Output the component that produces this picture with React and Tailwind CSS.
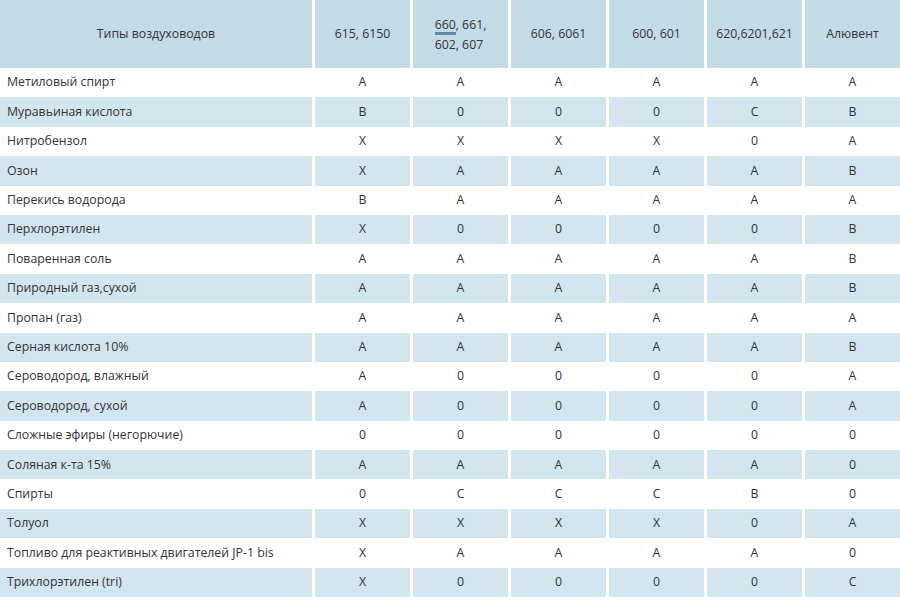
import React from "react";

const cols = ["615, 6150", "660", "606, 6061", "600, 601", "620,6201,621", "Алювент"];

const rows = [
  ["Метиловый спирт", "A", "A", "A", "A", "A", "A"],
  ["Муравьиная кислота", "B", "0", "0", "0", "C", "B"],
  ["Нитробензол", "X", "X", "X", "X", "0", "A"],
  ["Озон", "X", "A", "A", "A", "A", "B"],
  ["Перекись водорода", "B", "A", "A", "A", "A", "A"],
  ["Перхлорэтилен", "X", "0", "0", "0", "0", "B"],
  ["Поваренная соль", "A", "A", "A", "A", "A", "B"],
  ["Природный газ,сухой", "A", "A", "A", "A", "A", "B"],
  ["Пропан (газ)", "A", "A", "A", "A", "A", "A"],
  ["Серная кислота 10%", "A", "A", "A", "A", "A", "B"],
  ["Сероводород, влажный", "A", "0", "0", "0", "0", "A"],
  ["Сероводород, сухой", "A", "0", "0", "0", "0", "A"],
  ["Сложные эфиры (негорючие)", "0", "0", "0", "0", "0", "0"],
  ["Соляная к-та 15%", "A", "A", "A", "A", "A", "0"],
  ["Спирты", "0", "C", "C", "C", "B", "0"],
  ["Толуол", "X", "X", "X", "X", "0", "A"],
  ["Топливо для реактивных двигателей JP-1 bis", "X", "A", "A", "A", "A", "0"],
  ["Трихлорэтилен (tri)", "X", "0", "0", "0", "0", "C"],
];

export default function App() {
  return (
    <div
      className="w-[900px] h-[601px] bg-white overflow-hidden text-[#333333] text-[12.3px]"
      style={{ fontFamily: '"Open Sans", "Noto Sans", sans-serif' }}
    >
      <div className="grid grid-cols-[312px_repeat(6,1fr)] gap-x-[3px] h-[68px]">
        <div className="bg-[#c4dbe8] flex items-center justify-center">Типы воздуховодов</div>
        {cols.map((c, i) =>
          c === "660" ? (
            <div key={i} className="bg-[#c4dbe8] flex items-center justify-center">
              <div className="leading-[20px] pt-[2px]">
                <div>
                  <span className="border-b-[3px] border-[#5a8ca6] leading-[14px] inline-block">660</span>, 661,
                </div>
                <div>602, 607</div>
              </div>
            </div>
          ) : (
            <div key={i} className="bg-[#c4dbe8] flex items-center justify-center">
              {c}
            </div>
          )
        )}
      </div>
      {rows.map((r, ri) => {
        const blue = ri % 2 === 1;
        return (
          <div
            key={ri}
            className="grid grid-cols-[312px_repeat(6,1fr)] gap-x-[3px] h-[29.4px]"
          >
            {r.map((v, ci) => (
              <div
                key={ci}
                className={
                  (blue ? "bg-[#d3e5ef] " : "") +
                  (ci === 0 ? "flex items-center pl-[7px]" : "flex items-center justify-center")
                }
              >
                {v}
              </div>
            ))}
          </div>
        );
      })}
    </div>
  );
}
